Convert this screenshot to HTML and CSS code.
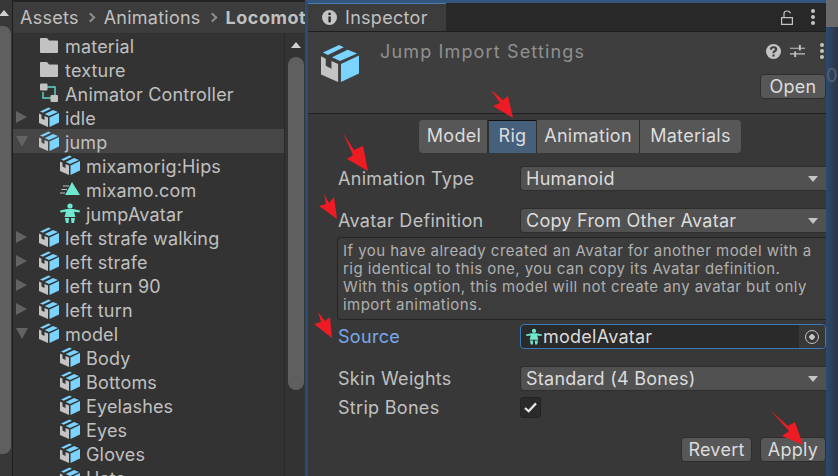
FILE: index.html
```html
<!DOCTYPE html>
<html lang="en">
<head>
    <meta charset="UTF-8">
    <title>Jump Import Settings</title>
    <link rel="stylesheet" href="styles.css">
</head>
<body>
    <svg class="defs" width="0" height="0">
        <symbol id="cube" viewBox="0 0 20 20">
            <path fill="#c4c4c4" d="M0 6.5 2.500 7.700V11.500L5.500 13V9L9 10.500V20L0 16Z"/>
            <path fill="#7bd3ff" d="M10.500 10.500 20 6V15.500L10.500 20Z"/>
            <path fill="#7bd3ff" d="M1 4.500 9.500 0.500 12 1.700 3.600 5.800Z"/>
            <path fill="#7bd3ff" d="M10 9 5.800 7 14 3 19 5Z"/>
        </symbol>
        <symbol id="avatar" viewBox="0 0 20 20">
            <circle cx="10" cy="3" r="2.600" fill="#6fe8cf"/>
            <path fill="#6fe8cf" d="M0 7.500 7 6H13L20 7.500 19.500 9.500 14 8.800 15.500 14H4.500L6 8.800 0.500 9.500Z"/>
            <path fill="#6fe8cf" d="M5 15H9L8.500 20H6ZM11 15H15L14 20H11.500Z"/>
        </symbol>
        <symbol id="folder" viewBox="0 0 18 15">
            <path fill="#c2c2c2" d="M0 1Q0 0 1 0H7L9 2.500H17Q18 2.500 18 3.500V14Q18 15 17 15H1Q0 15 0 14Z"/>
        </symbol>
    </svg>

    <div class="page">
        <div class="side-strip">
            <span class="arrow-up"></span>
            <div class="strip-thumb"></div>
        </div>

        <section class="project">
            <div class="crumbs">
                <span>Assets</span><span class="sep"></span>
                <span>Animations</span><span class="sep"></span>
                <b>Locomotion</b>
            </div>
            <div class="tree-wrap">
                <div class="tree">
                    <div class="row"><i class="fold"></i><svg class="ico folder"><use href="#folder"/></svg>material</div>
                    <div class="row"><i class="fold"></i><svg class="ico folder"><use href="#folder"/></svg>texture</div>
                    <div class="row"><i class="fold"></i>
                        <svg class="ico" viewBox="0 0 20 20">
                            <path fill="none" stroke="#5fd9c4" stroke-width="1.400" d="M4 9V15H12M8 4H16V12"/>
                            <rect x="1" y="0.500" width="7.500" height="7" rx="1" fill="#c2c2c2"/>
                            <rect x="11.500" y="12" width="7.500" height="7" rx="1" fill="#c2c2c2"/>
                        </svg>Animator Controller</div>
                    <div class="row"><i class="fold closed"></i><svg class="ico"><use href="#cube"/></svg>idle</div>
                    <div class="row picked"><i class="fold open"></i><svg class="ico"><use href="#cube"/></svg>jump</div>
                    <div class="row child"><svg class="ico"><use href="#cube"/></svg>mixamorig:Hips</div>
                    <div class="row child">
                        <svg class="ico" viewBox="0 0 20 20">
                            <path fill="#6fe8cf" d="M12 3 20 16H5Z"/>
                            <path fill="none" stroke="#c2c2c2" stroke-width="1.200" d="M3 7H9M1.500 10.500H7M0 14H5"/>
                        </svg>mixamo.com</div>
                    <div class="row child"><svg class="ico"><use href="#avatar"/></svg>jumpAvatar</div>
                    <div class="row"><i class="fold closed"></i><svg class="ico"><use href="#cube"/></svg>left strafe walking</div>
                    <div class="row"><i class="fold closed"></i><svg class="ico"><use href="#cube"/></svg>left strafe</div>
                    <div class="row"><i class="fold closed"></i><svg class="ico"><use href="#cube"/></svg>left turn 90</div>
                    <div class="row"><i class="fold closed"></i><svg class="ico"><use href="#cube"/></svg>left turn</div>
                    <div class="row"><i class="fold open"></i><svg class="ico"><use href="#cube"/></svg>model</div>
                    <div class="row child"><svg class="ico"><use href="#cube"/></svg>Body</div>
                    <div class="row child"><svg class="ico"><use href="#cube"/></svg>Bottoms</div>
                    <div class="row child"><svg class="ico"><use href="#cube"/></svg>Eyelashes</div>
                    <div class="row child"><svg class="ico"><use href="#cube"/></svg>Eyes</div>
                    <div class="row child"><svg class="ico"><use href="#cube"/></svg>Gloves</div>
                    <div class="row child"><svg class="ico"><use href="#cube"/></svg>Hats</div>
                </div>
                <div class="tree-scroll">
                    <span class="arrow-up"></span>
                    <div class="tree-thumb"></div>
                </div>
            </div>
        </section>

        <section class="inspector">
            <div class="tabbar">
                <div class="tab">
                    <svg class="tab-ico" viewBox="0 0 14 14">
                        <circle cx="7" cy="7" r="7" fill="#c4c4c4"/>
                        <rect x="6" y="2.500" width="2.200" height="2.200" fill="#282828"/>
                        <rect x="6" y="6" width="2.200" height="5.500" fill="#282828"/>
                    </svg>
                    Inspector
                </div>
                <div class="tab-tools">
                    <svg class="lock" viewBox="0 0 12 15">
                        <path fill="none" stroke="#c4c4c4" stroke-width="1.200" d="M0.600 7.600H11.400V14.400H0.600ZM3 7.500V3.500Q3 1 6 1 9 1 9.500 3.500"/>
                    </svg>
                    <span class="dots"><i></i><i></i><i></i></span>
                </div>
            </div>

            <header class="asset-head">
                <svg class="big-cube"><use href="#cube"/></svg>
                <h1>Jump Import Settings</h1>
                <div class="head-right">
                    <div class="head-tools">
                        <svg class="help" viewBox="0 0 14 14">
                            <circle cx="7" cy="7" r="7" fill="#c4c4c4"/>
                            <path fill="none" stroke="#3e3e3e" stroke-width="2" d="M4.500 5.300Q4.700 3 7 3 9.500 3 9.500 5 9.500 6.200 8 6.800 7 7.200 7 8.600"/>
                            <rect x="6" y="9.800" width="2" height="2" fill="#3e3e3e"/>
                        </svg>
                        <svg class="sliders" viewBox="0 0 16 14">
                            <path fill="none" stroke="#c4c4c4" stroke-width="1.200" d="M0 4H16M0 10H16"/>
                            <rect x="9.500" y="0.500" width="2" height="6" fill="#c4c4c4"/>
                            <rect x="4.500" y="7.500" width="2" height="6" fill="#c4c4c4"/>
                        </svg>
                        <span class="dots"><i></i><i></i><i></i></span>
                    </div>
                    <button class="btn">Open</button>
                </div>
            </header>

            <div class="body">
                <div class="tabs">
                    <span class="seg seg-model">Model</span>
                    <span class="seg seg-rig">Rig</span>
                    <span class="seg seg-anim">Animation</span>
                    <span class="seg seg-mat">Materials</span>
                </div>

                <div class="field first">
                    <label>Animation Type</label>
                    <div class="select">Humanoid<i></i></div>
                </div>
                <div class="field second">
                    <label>Avatar Definition</label>
                    <div class="select">Copy From Other Avatar<i></i></div>
                </div>
                <div class="helpbox">If you have already created an Avatar for another model with a<br>rig identical to this one, you can copy its Avatar definition.<br>With this option, this model will not create any avatar but only<br>import animations.</div>
                <div class="field source">
                    <label>Source</label>
                    <div class="objfield">
                        <svg class="obj-ico"><use href="#avatar"/></svg>
                        <span>modelAvatar</span>
                        <span class="picker"><i></i></span>
                    </div>
                </div>
                <div class="field skin">
                    <label>Skin Weights</label>
                    <div class="select">Standard (4 Bones)<i></i></div>
                </div>
                <div class="field strip">
                    <label>Strip Bones</label>
                    <div class="check">
                        <svg viewBox="0 0 14 12"><path fill="none" stroke="#e6e6e6" stroke-width="2.400" d="M1 6.500 5 10 13 1.500"/></svg>
                    </div>
                </div>
                <div class="actions">
                    <button class="btn revert">Revert</button>
                    <button class="btn">Apply</button>
                </div>
            </div>
        </section>

        <div class="gutter"><span>0:0</span></div>
    </div>

    <!-- red marks drawn over the screenshot -->
    <svg class="marks" viewBox="0 0 838 476">
        <path d="M491 90 503 100 508 96 513 118 493 106 500 103Z"/>
        <path d="M343 133 354 150 363 146 368 171 347 159 353 155Z"/>
        <path d="M324 194 329 203 334 197 337 219 319 206 326 204Z"/>
        <path d="M318 312 325 321 330 317 332 338 314 324 321 322Z"/>
        <path d="M770 410 788 426 795 422 803 445 782 436 789 431Z"/>
    </svg>
</body>
</html>
```
FILE: styles.css
```css
/* Reset */
* {
    margin: 0;
    padding: 0;
    box-sizing: border-box;
}

html, body {
    width: 838px;
    height: 476px;
    overflow: hidden;
    background: #282828;
    font-family: "Inter", "Liberation Sans", sans-serif;
    font-size: 18px;
    color: #c0c0c0;
}

.defs {
    position: absolute;
}

.page {
    display: flex;
    height: 476px;
}

.arrow-up {
    display: block;
    width: 0;
    height: 0;
    border-left: 5px solid transparent;
    border-right: 5px solid transparent;
    border-bottom: 6px solid #d0d0d0;
}

/* Far left strip */
.side-strip {
    width: 13px;
    flex: none;
    background: #383838;
    border-right: 1px solid #1e1e1e;
    padding-top: 10px;
}

.side-strip .arrow-up {
    margin-left: -1px;
}

.strip-thumb {
    width: 11px;
    height: 428px;
    margin-top: 10px;
    background: #5f5f5f;
    border-radius: 0 8px 8px 0;
}

/* Project panel */
.project {
    width: 292px;
    flex: none;
    display: flex;
    flex-direction: column;
    background: #333;
}

.crumbs {
    height: 33px;
    flex: none;
    display: flex;
    align-items: center;
    gap: 10px;
    padding: 0 0 0 7px;
    background: #3c3c3c;
    border-top: 2px solid #242424;
    white-space: nowrap;
    overflow: hidden;
    letter-spacing: 0.25px;
}

.crumbs b {
    font-weight: 700;
    letter-spacing: 0.5px;
}

.sep {
    width: 7px;
    height: 7px;
    margin-left: -2px;
    flex: none;
    border-top: 2px solid #8c8c8c;
    border-right: 2px solid #8c8c8c;
    transform: rotate(45deg);
}

.tree-wrap {
    flex: 1;
    display: flex;
    min-height: 0;
}

.tree {
    flex: 1;
    min-width: 0;
}

.row {
    height: 24px;
    display: flex;
    align-items: center;
    padding: 2px 0 0 3px;
    white-space: nowrap;
    letter-spacing: 0.18px;
}

.row.picked {
    background: #464646;
}

.row.child {
    padding-left: 47px;
}

.fold {
    width: 23px;
    flex: none;
    height: 12px;
    margin-top: -2px;
}

.fold.closed::before {
    content: "";
    display: block;
    width: 0;
    height: 0;
    border-top: 6px solid transparent;
    border-bottom: 6px solid transparent;
    border-left: 11px solid #636363;
}

.fold.open::before {
    content: "";
    display: block;
    width: 0;
    height: 0;
    margin-top: 1px;
    border-left: 6px solid transparent;
    border-right: 6px solid transparent;
    border-top: 11px solid #636363;
}

.ico {
    width: 20px;
    height: 20px;
    flex: none;
    margin: -2px 6px 0 0;
}

.folder {
    height: 15px;
}

.tree-scroll {
    width: 21px;
    flex: none;
    padding: 9px 0 0 3px;
    background: #333;
    border-left: 1px solid #2a2a2a;
}

.tree-scroll .arrow-up {
    margin-left: 3px;
}

.tree-thumb {
    width: 16px;
    height: 333px;
    margin-top: 9px;
    background: #5f5f5f;
    border-radius: 8px;
}

/* Inspector panel */
.inspector {
    width: 521px;
    flex: none;
    display: flex;
    flex-direction: column;
    background: #383838;
    border-top: 3px solid #33567e;
    border-left: 3px solid #2b4c74;
    overflow: hidden;
}

.tabbar {
    height: 29px;
    flex: none;
    display: flex;
    justify-content: space-between;
    background: #282828;
    border-bottom: 1px solid #1e1e1e;
}

.tab {
    width: 138px;
    display: flex;
    align-items: center;
    gap: 8px;
    padding-left: 14px;
    background: #3c3c3c;
    border-top: 1px solid #4a7cb0;
    letter-spacing: 0.3px;
}

.tab-ico {
    width: 15px;
    height: 15px;
}

.tab-tools {
    display: flex;
    align-items: center;
    gap: 18px;
    padding-right: 11px;
}

.lock {
    width: 12px;
    height: 15px;
}

.dots {
    display: flex;
    flex-direction: column;
    gap: 2px;
}

.dots i {
    width: 4px;
    height: 4px;
    border-radius: 50%;
    background: #c4c4c4;
}

.asset-head {
    height: 82px;
    flex: none;
    display: flex;
    background: #3e3e3e;
    border-bottom: 1px solid #222;
}

.big-cube {
    width: 38px;
    height: 42px;
    margin: 10px 0 0 13px;
    flex: none;
}

h1 {
    flex: 1;
    margin: 9px 0 0 21px;
    font-size: 18px;
    font-weight: 400;
    letter-spacing: 1.15px;
    color: #909090;
    white-space: nowrap;
}

.head-right {
    width: 90px;
    flex: none;
    display: flex;
    flex-direction: column;
    align-items: flex-end;
}

.head-tools {
    display: flex;
    align-items: center;
    justify-content: flex-end;
    gap: 9px;
    height: 28px;
    margin: 5px 0 9px;
    width: 88px;
    padding-right: 2px;
}

.head-tools .dots {
    margin-left: 6px;
}

.help {
    width: 15px;
    height: 15px;
    flex: none;
}

.sliders {
    width: 15px;
    height: 14px;
    flex: none;
}

.btn {
    width: 66px;
    height: 25px;
    background: #575757;
    color: #dcdcdc;
    border: 1px solid #2e2e2e;
    border-radius: 4px;
    font: inherit;
    letter-spacing: 0.25px;
    line-height: 22px;
}

/* Importer body */
.body {
    flex: 1;
    padding: 0 0 0 29px;
}

.tabs {
    display: flex;
    height: 33px;
    margin: 6px 0 0 82px;
}

.seg {
    display: flex;
    align-items: center;
    justify-content: center;
    padding-bottom: 3px;
    background: #575757;
    color: #dcdcdc;
    border-right: 1px solid #2e2e2e;
    letter-spacing: 0.3px;
}

.seg-model {
    width: 69px;
    padding-left: 2px;
    border-radius: 4px 0 0 4px;
}

.seg-rig {
    width: 49px;
    background: #46607c;
    border-top: 1px solid #111;
    border-left: 1px solid #2e2e2e;
}

.seg-anim {
    width: 103px;
}

.seg-mat {
    width: 101px;
    border-radius: 0 4px 4px 0;
    border-right: 0;
}

.field {
    display: flex;
    align-items: center;
    height: 25px;
}

.field label {
    width: 183px;
    flex: none;
    padding-left: 1px;
    letter-spacing: 0.3px;
}

.first {
    margin-top: 13px;
}

.second {
    margin-top: 17px;
}

.select {
    flex: 1;
    height: 25px;
    position: relative;
    padding-left: 5px;
    line-height: 24px;
    background: #515151;
    border: 1px solid #2e2e2e;
    border-right: 0;
    border-radius: 4px 0 0 4px;
    color: #dcdcdc;
    letter-spacing: 0.25px;
}

.select i {
    position: absolute;
    right: 8px;
    top: 9px;
    width: 0;
    height: 0;
    border-left: 5px solid transparent;
    border-right: 5px solid transparent;
    border-top: 6px solid #c4c4c4;
}

.helpbox {
    height: 83px;
    margin-top: 4px;
    padding: 4px 0 0 5px;
    font-size: 15px;
    line-height: 18px;
    letter-spacing: 0.45px;
    color: #b0b0b0;
    white-space: nowrap;
    background: #3c3c3c;
    border: 1px solid #252525;
    border-right: 0;
    border-radius: 4px 0 0 4px;
}

.source {
    margin-top: 4px;
}

.source label {
    color: #78a9e8;
}

.objfield {
    flex: 1;
    height: 25px;
    display: flex;
    align-items: center;
    position: relative;
    padding-left: 5px;
    background: #2a2a2a;
    border: 1px solid #3a79bb;
    border-radius: 4px;
    color: #dcdcdc;
    letter-spacing: 0.25px;
}

.obj-ico {
    width: 16px;
    height: 17px;
    margin-right: 1px;
}

.picker {
    position: absolute;
    right: 0;
    top: 0;
    bottom: 0;
    width: 26px;
    display: flex;
    align-items: center;
    justify-content: center;
    background: #383838;
    border-radius: 0 4px 4px 0;
}

.picker i {
    width: 14px;
    height: 14px;
    border: 1.5px solid #c4c4c4;
    border-radius: 50%;
    background: radial-gradient(#c4c4c4 0 2.5px, transparent 3px);
}

.skin {
    margin-top: 17px;
}

.strip {
    margin-top: 4px;
}

.check {
    width: 21px;
    height: 21px;
    display: flex;
    align-items: center;
    justify-content: center;
    background: #2a2a2a;
    border: 1px solid #222;
    border-radius: 3px;
}

.check svg {
    width: 13px;
    height: 11px;
}

.actions {
    display: flex;
    justify-content: flex-end;
    gap: 8px;
    margin-top: 17px;
}

.revert {
    width: 71px;
}

/* Sliver of the window behind */
.gutter {
    flex: 1;
    padding-top: 65px;
    background: linear-gradient(#6a6a6a 0 27px, transparent 27px), linear-gradient(90deg, #2b4a70, #2e3640);
    color: #556270;
    overflow: hidden;
    white-space: nowrap;
}

/* Red annotation arrows */
.marks {
    position: absolute;
    left: 0;
    top: 0;
    width: 838px;
    height: 476px;
    fill: #ed1c24;
    pointer-events: none;
}
```
